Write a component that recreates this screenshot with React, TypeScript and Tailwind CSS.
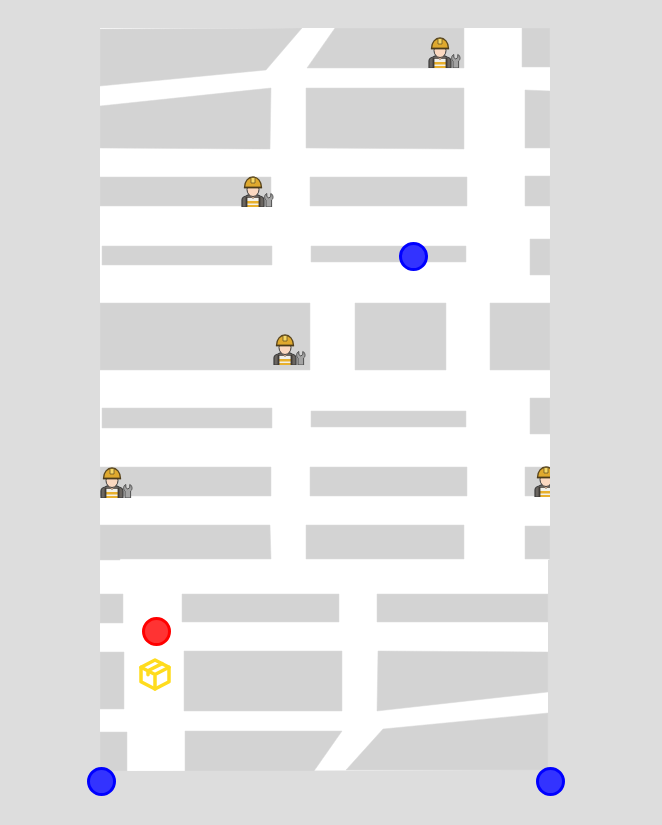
const blocks = [
  "100,29 302,28 266,70 100,86",
  "335,28 464,28 464,68 307,68",
  "522,28 550,28 550,67 522,67",
  "100,106 271,88 270,149 100,148",
  "306,88 464,88 464,149 306,148",
  "525,90 550,91 550,148 525,148",
  "100,177 271,177 271,206 100,206",
  "310,177 467,177 467,206 310,206",
  "525,176 550,176 550,206 525,206",
  "102,246 272,246 272,265 102,265",
  "311,246 466,246 466,262 311,262",
  "530,239 550,239 550,275 530,275",
  "100,303 310,303 310,370 100,370",
  "355,303 446,303 446,370 355,370",
  "490,303 550,303 550,370 490,370",
  "102,408 272,408 272,428 102,428",
  "311,411 466,411 466,427 311,427",
  "530,398 550,398 550,434 530,434",
  "100,467 271,467 271,496 100,496",
  "310,467 467,467 467,496 310,496",
  "525,467 550,467 550,496 525,496",
  "100,525 270,525 271,559 120,559 120,560 100,560",
  "306,525 464,525 464,559 306,559",
  "525,526 550,526 550,559 525,559",
  "100,594 123,594 123,623 100,623",
  "182,594 339,594 339,622 182,622",
  "377,594 548,594 548,622 377,622",
  "100,652 124,652 124,709 100,709",
  "184,651 342,651 342,711 184,711",
  "378,651 548,652 548,692 377,711",
  "100,732 127,732 127,771 100,771",
  "185,731 342,731 314,771 185,771",
  "383,729 548,713 548,770 346,770",
]

const workers = [
  { x: 328, y: 9 },
  { x: 141, y: 148 },
  { x: 173, y: 306 },
  { x: 0, y: 439 },
  { x: 434, y: 438 },
]

// left/top inside the map box
const pins = [
  { x: 298.5, y: 213.5, color: "blue" },
  { x: -12.8, y: 739, color: "blue" },
  { x: 436, y: 739, color: "blue" },
  { x: 42.2, y: 589, color: "red" },
]

function Worker({ x, y }: { x: number; y: number }) {
  return (
    <svg className="absolute" style={{ left: x, top: y }} width="33" height="31" viewBox="0 0 33 31">
      <path d="M1 31v-7q0-3 4-4l4-2h6l4 2q4 1 4 4v7z" fill="#6a6560" stroke="#3a3a3a" strokeWidth="1.2" />
      <path d="M5 22h14v9H5z" fill="#f1f0ea" />
      <path d="M5 25h14v2.500H5zM5 29h14v2H5z" fill="#e8b02c" />
      <path d="M5.500 21v10M18.500 21v10" stroke="#3f3a35" strokeWidth="1.800" />
      <path d="M9 17h6v3l-3 2.500-3-2.500z" fill="#f3c6a6" stroke="#6b5a4a" strokeWidth="0.7" />
      <ellipse cx="12" cy="13.500" rx="6" ry="7" fill="#fbd8c0" stroke="#3d3d3d" strokeWidth="1" />
      <path d="M3.500 11.500c0-6.500 4-10.500 8.500-10.500s8.500 4 8.500 10.500z" fill="#dfa92e" stroke="#5a4720" strokeWidth="1.300" />
      <path d="M10 1.500h4v5.500h-4z" fill="#f6d765" stroke="#5a4720" strokeWidth="0.700" />
      <path d="M3 11.500h18" stroke="#4a3a1c" strokeWidth="1.400" />
      <path d="M25.800 17.500v3l2 1.500 2-1.500v-3c2.500 1 3 5 .8 6.500v7h-5.600v-7c-2.200-1.500-1.700-5.500.8-6.500z" fill="#a3a3a3" stroke="#4f4f4f" strokeWidth="1" />
    </svg>
  )
}

function Pin({ x, y, color }: { x: number; y: number; color: string }) {
  return (
    <div
      className={`absolute h-[29px] w-[29px] rounded-full border-[3px] ${
        color === "red" ? "border-[#ff0000] bg-[#ff3333]" : "border-[#0000ff] bg-[#3333ff]"
      }`}
      style={{ left: x, top: y }}
    />
  )
}

export default function App() {
  return (
    <div className="h-[825px] w-[662px] overflow-hidden bg-[#dddddd] pl-[100px] pt-[28px]">
      <div className="relative h-[743px] w-[450px]">
        <div className="absolute inset-0 overflow-hidden">
          <svg width="450" height="743" viewBox="100 28 450 743" className="block">
            <polygon points="100,28 550,28 550,559 548,560 548,770 100,771" fill="#ffffff" />
            {blocks.map((points) => (
              <polygon key={points} points={points} fill="#d3d3d3" stroke="#d8d8d8" strokeWidth="0.5" />
            ))}
          </svg>
          {workers.map((w) => (
            <Worker key={w.x} x={w.x} y={w.y} />
          ))}
        </div>
        {pins.map((p) => (
          <Pin key={`${p.x}-${p.y}`} x={p.x} y={p.y} color={p.color} />
        ))}
        <svg className="absolute left-[39px] top-[630px]" width="32" height="33" viewBox="0 0 32 33" fill="none" stroke="#ffdc1e" strokeWidth="3.500" strokeLinejoin="round" strokeLinecap="round">
          <path d="M16 2l14 7.250v14.500l-14 7.250-14-7.250v-14.500z" />
          <path d="M16 16.500l14-7.250M16 16.500v14.500M16 16.500L2 9.250M23 5.600L9 12.800v4" />
        </svg>
      </div>
    </div>
  )
}
